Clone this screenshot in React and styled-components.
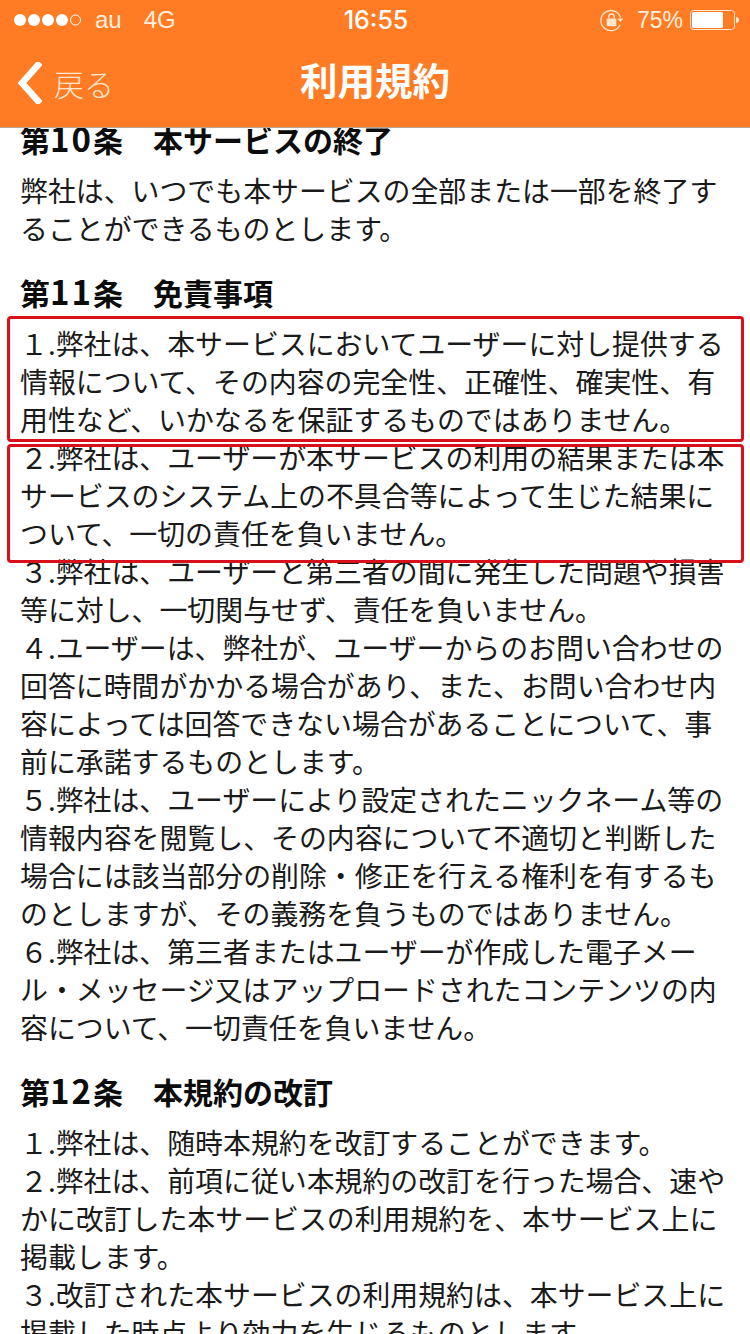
import React from "react";
import styled, { createGlobalStyle } from "styled-components";

const GlobalStyle = createGlobalStyle`
    html, body {
        margin: 0;
        padding: 0;
        background: #FFF;
    }
    body {
        font-family: "Noto Sans CJK JP", "Liberation Sans", sans-serif;
    }
`

const Page = styled.div`
    width: 750px;
    height: 1334px;
    overflow: hidden;
    display: flex;
    flex-direction: column;
`

const Header = styled.header`
    flex: none;
    height: 128px;
    box-sizing: border-box;
    background-color: #FF7B24;
    border-bottom: 1px solid #B9A594;
    display: flex;
    flex-direction: column;
    color: #FFF;
`

const StatusBar = styled.div`
    height: 40px;
    display: grid;
    grid-template-columns: 1fr auto 1fr;
    align-items: center;
    padding: 0 11px 0 13px;
    font-family: "Liberation Sans", sans-serif;
    font-size: 24px;
    color: #FFEFDF;
`

const StatusLeft = styled.div`
    display: flex;
    align-items: center;
`

const Carrier = styled.span`
    margin-left: ${props => props.$gap}px;
`

const Time = styled.span`
    color: #FFF;
    font-family: Inter, "Liberation Sans", sans-serif;
    font-weight: 500;
    font-size: 25px;
`

const StatusRight = styled.div`
    display: flex;
    align-items: center;
    justify-content: flex-end;
    gap: 14px;
`

const Percent = styled.span`
    font-size: 23px;
    margin-right: -7px;
`

const NavBar = styled.div`
    flex: 1;
    display: grid;
    grid-template-columns: 1fr auto 1fr;
    align-items: center;
    padding: 0 17px 10px;
`

const BackLink = styled.div`
    display: flex;
    align-items: center;
    gap: 12px;
    margin-top: 8px;
    font-size: 30px;
    font-weight: 300;
    color: #FFE6CF;
`

const Title = styled.h1`
    margin: 0;
    font-size: 37.5px;
    font-weight: bold;
    line-height: 44px;
    color: #FFF;
`

const Content = styled.main`
    flex: 1;
    overflow: hidden;
    padding: 0 20px;
    color: #1A1A1A;
    font-size: 27.9px;
    line-height: 38px;
`

const Article = styled.section`
    margin-top: ${props => props.$top}px;
`

const Heading = styled.h2`
    margin: 0 0 14px;
    font-size: 30px;
    line-height: 35px;
    font-weight: bold;
    color: #0C0C0C;
    white-space: nowrap;
`

const ArticleNo = styled.span`
    font-size: 33px;
    line-height: 0;
    letter-spacing: 2px;
`

const Line = styled.div`
    white-space: nowrap;
`

const Clause = styled.div`
    position: relative;
`

const RedFrame = styled.div`
    position: absolute;
    left: -13px;
    width: 737px;
    top: ${props => props.$top}px;
    bottom: ${props => props.$bottom}px;
    border: 3px solid #D8101C;
    border-radius: 4px;
    box-sizing: border-box;
`

function SignalDots() {
    return (
        <svg width="68" height="14" viewBox="0 0 68 14">
            {[7, 21, 35, 49].map(x => <circle key={x} cx={x} cy="7" r="6" fill="#FFF" />)}
            <circle cx="62.5" cy="7" r="5" fill="none" stroke="#FFF" strokeWidth="1" />
        </svg>
    )
}

function RotationLock() {
    return (
        <svg width="23" height="24" viewBox="0 0 24 24" fill="none">
            <path d="M21.5 9.5A10.5 10.5 0 1 0 21 17" stroke="#FFE6CF" strokeWidth="1.4" />
            <path d="M18 10.5h6.5l-3.2 3.6z" fill="#FFE6CF" />
            <rect x="7" y="10.5" width="10" height="8" rx="1" fill="#FFE6CF" />
            <path d="M9.2 10.5V8.5a2.8 2.8 0 0 1 5.6 0v2" stroke="#FFE6CF" strokeWidth="1.5" />
        </svg>
    )
}

function Battery() {
    return (
        <svg width="49" height="20" viewBox="0 0 49 20">
            <rect x="0.5" y="0.5" width="44" height="19" rx="3" fill="none" stroke="#FFE6CF" />
            <rect x="2" y="2" width="31" height="16" rx="1.5" fill="#FFF" />
            <path d="M46 7c2 0 3 1 3 3s-1 3-3 3z" fill="#FFE6CF" />
        </svg>
    )
}

function BackChevron() {
    return (
        <svg width="25" height="42" viewBox="0 0 25 42">
            <polyline points="21,3 5,21 21,39" fill="none" stroke="#FFF" strokeWidth="6.5" strokeLinecap="square" />
        </svg>
    )
}

const lines = {
    art10: [
        "弊社は、いつでも本サービスの全部または一部を終了す",
        "ることができるものとします。",
    ],
    c1: [
        "１.弊社は、本サービスにおいてユーザーに対し提供する",
        "情報について、その内容の完全性、正確性、確実性、有",
        "用性など、いかなるを保証するものではありません。",
    ],
    c2: [
        "２.弊社は、ユーザーが本サービスの利用の結果または本",
        "サービスのシステム上の不具合等によって生じた結果に",
        "ついて、一切の責任を負いません。",
    ],
    art11: [
        "３.弊社は、ユーザーと第三者の間に発生した問題や損害",
        "等に対し、一切関与せず、責任を負いません。",
        "４.ユーザーは、弊社が、ユーザーからのお問い合わせの",
        "回答に時間がかかる場合があり、また、お問い合わせ内",
        "容によっては回答できない場合があることについて、事",
        "前に承諾するものとします。",
        "５.弊社は、ユーザーにより設定されたニックネーム等の",
        "情報内容を閲覧し、その内容について不適切と判断した",
        "場合には該当部分の削除・修正を行える権利を有するも",
        "のとしますが、その義務を負うものではありません。",
        "６.弊社は、第三者またはユーザーが作成した電子メー",
        "ル・メッセージ又はアップロードされたコンテンツの内",
        "容について、一切責任を負いません。",
    ],
    art12: [
        "１.弊社は、随時本規約を改訂することができます。",
        "２.弊社は、前項に従い本規約の改訂を行った場合、速や",
        "かに改訂した本サービスの利用規約を、本サービス上に",
        "掲載します。",
        "３.改訂された本サービスの利用規約は、本サービス上に",
        "掲載した時点より効力を生じるものとします。",
    ],
}

const renderLines = list => list.map(text => <Line key={text}>{text}</Line>)

export default function App() {
    return (
        <Page>
            <GlobalStyle />
            <Header>
                <StatusBar>
                    <StatusLeft>
                        <SignalDots />
                        <Carrier $gap={14}>au</Carrier>
                        <Carrier $gap={22}>4G</Carrier>
                    </StatusLeft>
                    <Time>16:55</Time>
                    <StatusRight>
                        <RotationLock />
                        <Percent>75%</Percent>
                        <Battery />
                    </StatusRight>
                </StatusBar>
                <NavBar>
                    <BackLink>
                        <BackChevron />
                        戻る
                    </BackLink>
                    <Title>利用規約</Title>
                </NavBar>
            </Header>
            <Content>
                <Article $top={-6}>
                    <Heading>第<ArticleNo>10</ArticleNo>条　本サービスの終了</Heading>
                    {renderLines(lines.art10)}
                </Article>
                <Article $top={28}>
                    <Heading>第<ArticleNo>11</ArticleNo>条　免責事項</Heading>
                    <Clause>
                        {renderLines(lines.c1)}
                        <RedFrame $top={-8} $bottom={-4} />
                    </Clause>
                    <Clause>
                        {renderLines(lines.c2)}
                        <RedFrame $top={6} $bottom={-11} />
                    </Clause>
                    {renderLines(lines.art11)}
                </Article>
                <Article $top={28}>
                    <Heading>第<ArticleNo>12</ArticleNo>条　本規約の改訂</Heading>
                    {renderLines(lines.art12)}
                </Article>
            </Content>
        </Page>
    )
}
